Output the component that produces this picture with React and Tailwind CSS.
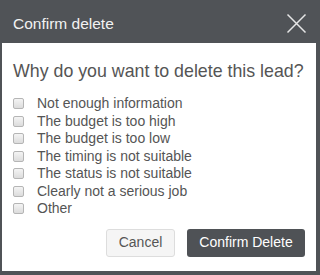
export default function App() {
  const items = [
    "Not enough information",
    "The budget is too high",
    "The budget is too low",
    "The timing is not suitable",
    "The status is not suitable",
    "Clearly not a serious job",
    "Other",
  ];
  return (
    <div className="w-[320px] h-[275px] bg-[#505357] flex flex-col pl-[2px] pr-[4px] pb-[4px]" style={{ fontFamily: '"Liberation Sans", Arial, sans-serif' }}>
      <div className="h-[43px] flex items-center justify-between pl-[11px] pr-[9px] shrink-0">
        <span className="text-[15.5px] text-[#f2f2f2] mt-[4px]">Confirm delete</span>
        <svg width="21" height="21" viewBox="0 0 21 21" className="mt-[3px]">
          <path d="M1.5 1.5 L19.5 19.5 M19.5 1.5 L1.5 19.5" stroke="#e6e6e6" strokeWidth="1.5" />
        </svg>
      </div>
      <div className="flex-1 bg-white flex flex-col px-[11px]">
        <div className="text-[17.8px] text-[#555] mt-[16px] leading-[24px] whitespace-nowrap">Why do you want to delete this lead?</div>
        <div className="flex flex-col mt-[12px]">
          {items.map((t) => (
            <label key={t} className="flex items-center h-[17.5px] text-[14px] text-[#555]">
              <span className="w-[11px] h-[11px] rounded-[2px] border border-[#b5b5b5] bg-gradient-to-b from-[#f4f4f4] to-[#dcdcdc] mr-[13px]" />
              {t}
            </label>
          ))}
        </div>
        <div className="flex justify-end gap-[12px] mt-[11px]">
          <button className="w-[69px] h-[28px] rounded-[3px] border border-[#ddd] bg-[#f5f5f5] text-[14px] text-[#555]">Cancel</button>
          <button className="w-[118px] h-[28px] rounded-[3px] bg-[#4f5256] text-[14px] text-white">Confirm Delete</button>
        </div>
      </div>
    </div>
  );
}
